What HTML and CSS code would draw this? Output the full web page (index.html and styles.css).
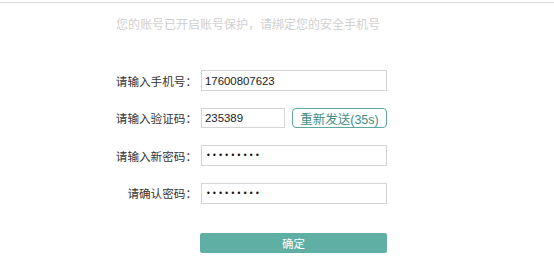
FILE: index.html
```
<!DOCTYPE html>
<html lang="zh">
<head>
<meta charset="utf-8">
<link rel="stylesheet" href="styles.css">
</head>
<body>
<div class="page">
  <p class="notice">您的账号已开启账号保护，请绑定您的安全手机号</p>
  <form class="form">
    <label class="label">请输入手机号：</label>
    <div class="field"><input class="input" type="text" value="17600807623"></div>
    <label class="label">请输入验证码：</label>
    <div class="field">
      <input class="input input-short" type="text" value="235389">
      <button type="button" class="resend">重新发送(35s)</button>
    </div>
    <label class="label">请输入新密码：</label>
    <div class="field"><span class="input dots">•••••••••</span></div>
    <label class="label">请确认密码：</label>
    <div class="field"><span class="input dots">•••••••••</span></div>
  </form>
  <div class="actions">
    <button type="button" class="submit">确定</button>
  </div>
</div>
</body>
</html>
```
FILE: styles.css
```
* { box-sizing: border-box; }
body {
  margin: 0;
  background: #fff;
  font-family: "Liberation Sans", "Noto Sans CJK SC", sans-serif;
  color: #333;
}
.page {
  margin-top: 2px;
  border-top: 1px solid #dcdcdc;
}
.notice {
  margin: 15px 0 0 116px;
  font-size: 12px;
  line-height: 14px;
  color: #d0d0d0;
}
.form {
  margin: 38px 0 0 116px;
  display: grid;
  grid-template-columns: 81px 186px;
  grid-auto-rows: 21px;
  column-gap: 4px;
  row-gap: 16.5px;
}
.label {
  display: flex;
  align-items: center;
  justify-content: flex-end;
  font-size: 11.6px;
  color: #333;
  white-space: nowrap;
}
.field {
  display: flex;
  align-items: center;
  gap: 7px;
}
.input {
  display: flex;
  align-items: center;
  width: 186px;
  height: 21px;
  border: 1px solid #d4d4d4;
  padding: 0 3px;
  font-family: "Liberation Sans", sans-serif;
  font-size: 11.4px;
  color: #222;
  background: #fff;
  outline: none;
}
.input-short {
  width: 84px;
  height: 20px;
}
.dots {
  font-size: 8px;
  letter-spacing: 1.4px;
  padding-left: 4px;
  font-family: "DejaVu Sans", sans-serif;
  color: #111;
}
.resend {
  width: 96px;
  height: 20px;
  border: 1px solid #5fa79d;
  border-radius: 4px;
  background: #fff;
  color: #3f8c82;
  font-family: "Liberation Sans", "Noto Sans CJK SC", sans-serif;
  font-size: 12.5px;
  padding: 0;
}
.actions {
  margin: 29px 0 0 200px;
}
.submit {
  width: 187px;
  height: 20px;
  border: none;
  border-radius: 2px;
  background: #60afa5;
  color: #fff;
  font-family: "Liberation Sans", "Noto Sans CJK SC", sans-serif;
  font-size: 11.5px;
  padding: 0;
}
```
